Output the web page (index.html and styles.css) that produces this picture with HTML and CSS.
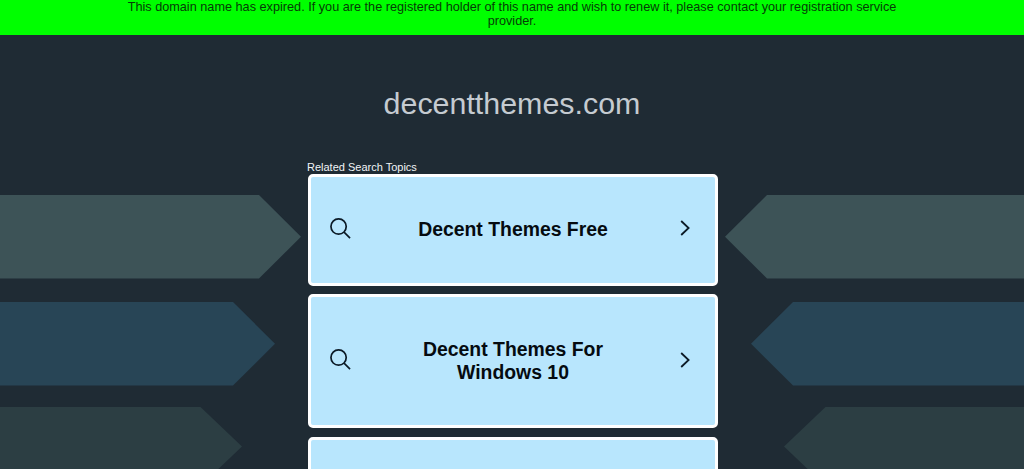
FILE: index.html
```html
<!DOCTYPE html>
<html lang="en">
<head>
  <meta charset="UTF-8" />
  <meta name="viewport" content="width=device-width, initial-scale=1.0" />
  <title>decentthemes.com</title>
  <link rel="stylesheet" href="styles.css">
</head>
<body>
  <div class="banner">
    <p>This domain name has expired. If you are the registered holder of this name and wish to renew it, please contact your registration service provider.</p>
  </div>

  <h1>decentthemes.com</h1>

  <div class="container">
    <div class="arrows left">
      <div class="arrow first"></div>
      <div class="arrow second"></div>
      <div class="arrow third"></div>
    </div>

    <div class="topics">
      <div class="label">Related Search Topics</div>
      <a class="card" href="#">
        <svg class="search" viewBox="0 0 22 22"><circle cx="9" cy="9" r="8" /><path d="M14.7 14.7L21 21" /></svg>
        <span class="title">Decent Themes Free</span>
        <svg class="chevron" viewBox="0 0 10 16"><path d="M1.2 1L8.6 8L1.2 15" /></svg>
      </a>
      <a class="card tall" href="#">
        <svg class="search" viewBox="0 0 22 22"><circle cx="9" cy="9" r="8" /><path d="M14.7 14.7L21 21" /></svg>
        <span class="title">Decent Themes For Windows 10</span>
        <svg class="chevron" viewBox="0 0 10 16"><path d="M1.2 1L8.6 8L1.2 15" /></svg>
      </a>
      <a class="card" href="#"></a>
    </div>

    <div class="arrows right">
      <div class="arrow first"></div>
      <div class="arrow second"></div>
      <div class="arrow third"></div>
    </div>
  </div>
</body>
</html>
```
FILE: styles.css
```css
body {
  font-family: Arial, "Liberation Sans", sans-serif;
  background-color: #1f2b34;
  margin: 0;
  display: flex;
  flex-direction: column;
  height: 100vh;
  overflow: hidden;
}

.banner {
  flex-shrink: 0;
  height: 34.5px;
  background-color: #00ff00;
  color: #063c06;
  text-align: center;
}

.banner p {
  width: 801px;
  margin: 0 auto;
  font-size: 12.7px;
  line-height: 14px;
}

h1 {
  flex-shrink: 0;
  margin: 0;
  padding-top: 50px;
  height: 76px;
  color: #c5cbd1;
  font-size: 30.4px;
  font-weight: normal;
  line-height: 36px;
  text-align: center;
}

.container {
  flex: 1;
  min-height: 0;
  display: grid;
  grid-template-columns: 307px 410.5px 306.5px;
  grid-template-rows: 100%;
  overflow: hidden;
}

.label {
  height: 13.5px;
  color: #f0f4f6;
  font-size: 11px;
  line-height: 13px;
}

.card {
  box-sizing: border-box;
  display: flex;
  align-items: center;
  height: 111.5px;
  margin: 0 0 8.5px 1px;
  padding: 0 25px 3px 19px;
  background-color: #b8e6fd;
  border: 3px solid #fff;
  border-radius: 5px;
  color: #050b10;
  text-decoration: none;
}

.card.tall {
  height: 134px;
}

.title {
  width: 200px;
  margin: 2px auto 0 62px;
  font-size: 19.4px;
  font-weight: bold;
  line-height: 23px;
  text-align: center;
}

.tall .title {
  margin-top: 3px;
}

.card svg {
  fill: none;
  stroke: #0b1a26;
  stroke-width: 1.8;
}

.search {
  width: 21px;
  height: 21px;
}

.chevron {
  width: 10px;
  height: 16px;
}

.topics,
.arrows {
  min-height: 0;
  overflow: hidden;
}

.arrows {
  display: flex;
  flex-direction: column;
  padding-top: 34.5px;
}

.arrow {
  flex-shrink: 0;
  height: 83.5px;
  margin-bottom: 23.5px;
  clip-path: polygon(0 0, calc(100% - 42px) 0, 100% 50%, calc(100% - 42px) 100%, 0 100%);
}

.right .arrow {
  align-self: flex-end;
  clip-path: polygon(42px 0, 100% 0, 100% 100%, 42px 100%, 0 50%);
}

.first {
  width: 301px;
  background-color: #3d5357;
}

.second {
  width: 275px;
  margin-bottom: 21px;
  background-color: #284556;
}

.third {
  width: 242px;
  height: 80px;
  background-color: #2c3e43;
}

.right .first {
  width: 299px;
}

.right .second {
  width: 273px;
}

.right .third {
  width: 240px;
}
```
